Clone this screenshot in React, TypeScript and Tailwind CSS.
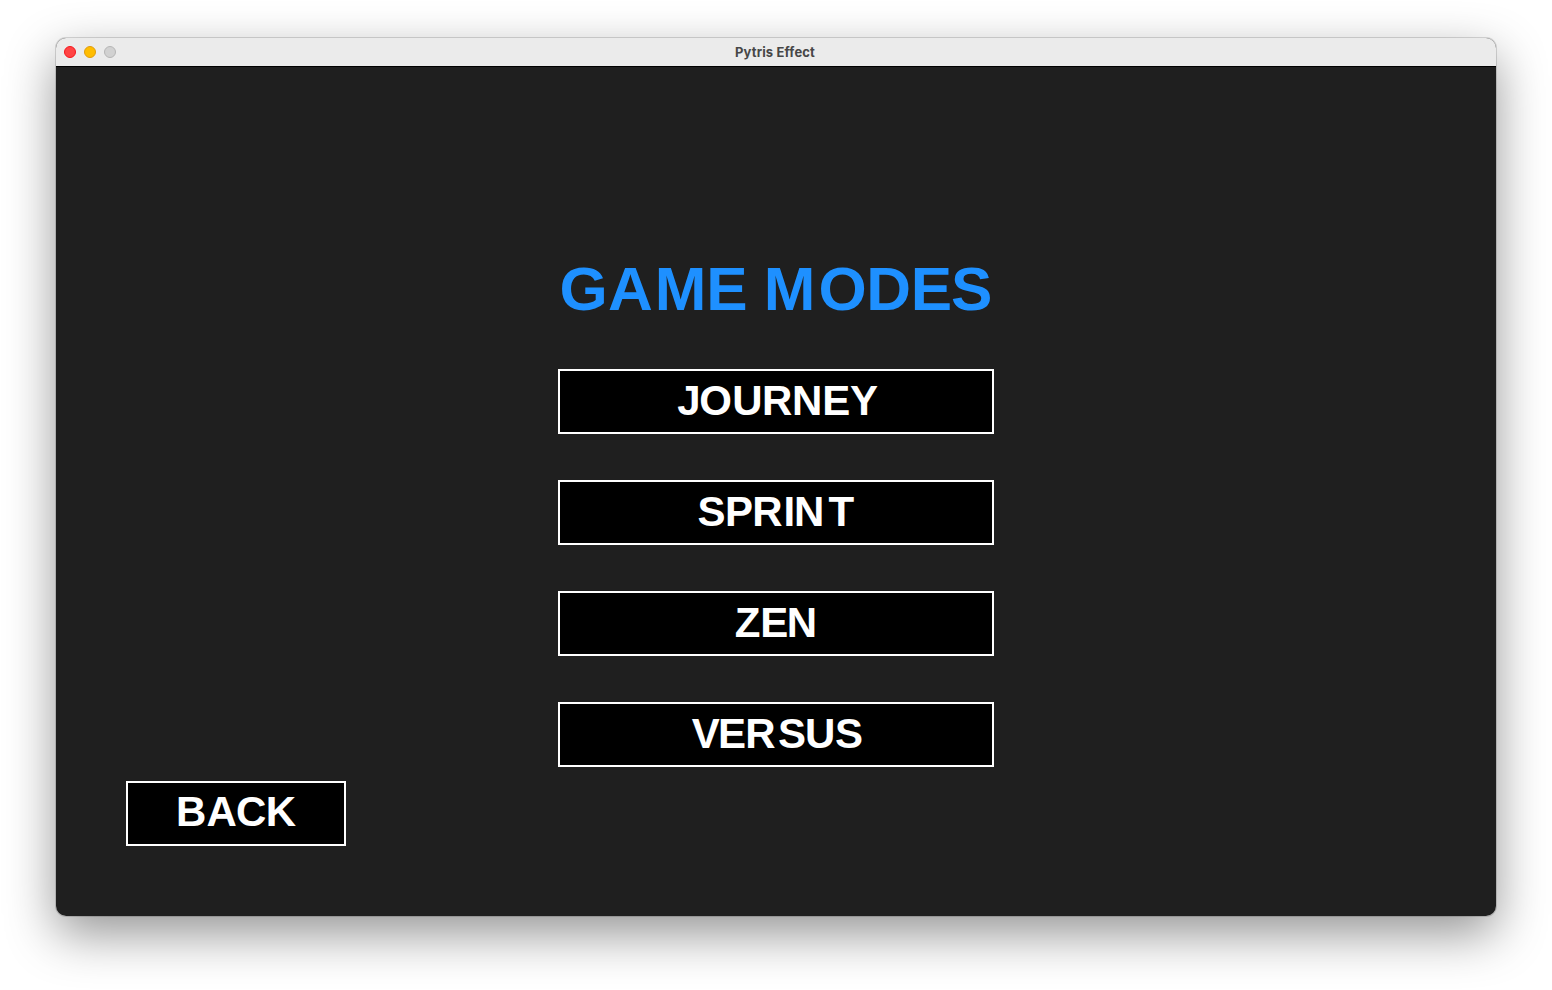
import React from "react";

type Glyph = [string, number];

/* Each entry is a character and the extra space that follows it, in pixels. */
const HEADING: Glyph[] = [
  ["G", 0.25], ["A", 2.0], ["M", -0.15], ["E", -0.15], [" ", -0.95],
  ["M", 3.05], ["O", -0.45], ["D", -0.25], ["E", -1.05], ["S", 0],
];

const MODES: { glyphs: Glyph[]; pad: string }[] = [
  { glyphs: [["J", -1.3], ["O", 0.3], ["U", -0.6], ["R", -0.3], ["N", -0.3], ["E", -0.1], ["Y", 0]], pad: "pl-[117.3px]" },
  { glyphs: [["S", -0.7], ["P", -0.8], ["R", 0.9], ["I", -1], ["N", 4.2], ["T", 0]], pad: "pl-[137.6px]" },
  { glyphs: [["Z", -0.2], ["E", -1.5], ["N", 0]], pad: "pl-[174.8px]" },
  { glyphs: [["V", -1.8], ["E", -0.7], ["R", 2.4], ["S", -1], ["U", -0.4], ["S", 0]], pad: "pl-[131.8px]" },
];

const BACK: Glyph[] = [["B", 0.2], ["A", -0.8], ["C", -0.6], ["K", 0]];

function Spaced({ glyphs }: { glyphs: Glyph[] }) {
  return (
    <>
      {glyphs.map(([char, space], i) => (
        <span key={i} style={{ letterSpacing: `${space}px` }}>{char}</span>
      ))}
    </>
  );
}

function MenuButton({ glyphs, className }: { glyphs: Glyph[]; className: string }) {
  return (
    <button
      className={`flex h-[65px] items-start whitespace-pre border-2 border-white bg-black text-left text-[42px] font-bold text-white ${className}`}
    >
      <span><Spaced glyphs={glyphs} /></span>
    </button>
  );
}

export default function App() {
  return (
    <div className="h-[990px] w-[1552px] overflow-hidden bg-white px-14 pt-[38px]">
      <div className="h-[878px] w-[1440px] rounded-[10px] shadow-[0_0_0_1px_rgba(0,0,0,0.14),0_18px_50px_rgba(0,0,0,0.42)]">
        <div className="flex h-full flex-col overflow-hidden rounded-[10px] bg-[#1f1f1f]">
          <header className="grid h-[29px] shrink-0 grid-cols-3 items-center border-b border-black bg-[#ebebeb] px-2">
            <div className="flex gap-2">
              <span className="size-3 rounded-full border border-[#f5161c] bg-[#ff4444]" />
              <span className="size-3 rounded-full border border-[#e09c0c] bg-[#ffbd00]" />
              <span className="size-3 rounded-full border border-[#b5b5b5] bg-[#d1d1d1]" />
            </div>
            <h1 className="pr-[2px] text-center font-['Inter',sans-serif] text-[13px] font-bold leading-[28px] tracking-[0.15px] text-[#474747]">
              Pytris Effect
            </h1>
          </header>
          <main className="flex flex-1 flex-col font-['Liberation_Sans',Arial,sans-serif] [font-kerning:none]">
            <h2 className="ml-[503.5px] mt-[185px] h-[73px] whitespace-pre text-[62px] font-bold leading-[73px] text-[#1e90ff]">
              <Spaced glyphs={HEADING} />
            </h2>
            <nav className="ml-[502px] mt-[44px] flex w-[436px] flex-col gap-[46px]">
              {MODES.map((mode, i) => (
                <MenuButton key={i} glyphs={mode.glyphs} className={`leading-[59px] ${mode.pad}`} />
              ))}
            </nav>
            <MenuButton glyphs={BACK} className="ml-[70px] mt-[14px] w-[220px] pl-[48px] leading-[57px]" />
          </main>
        </div>
      </div>
    </div>
  );
}
